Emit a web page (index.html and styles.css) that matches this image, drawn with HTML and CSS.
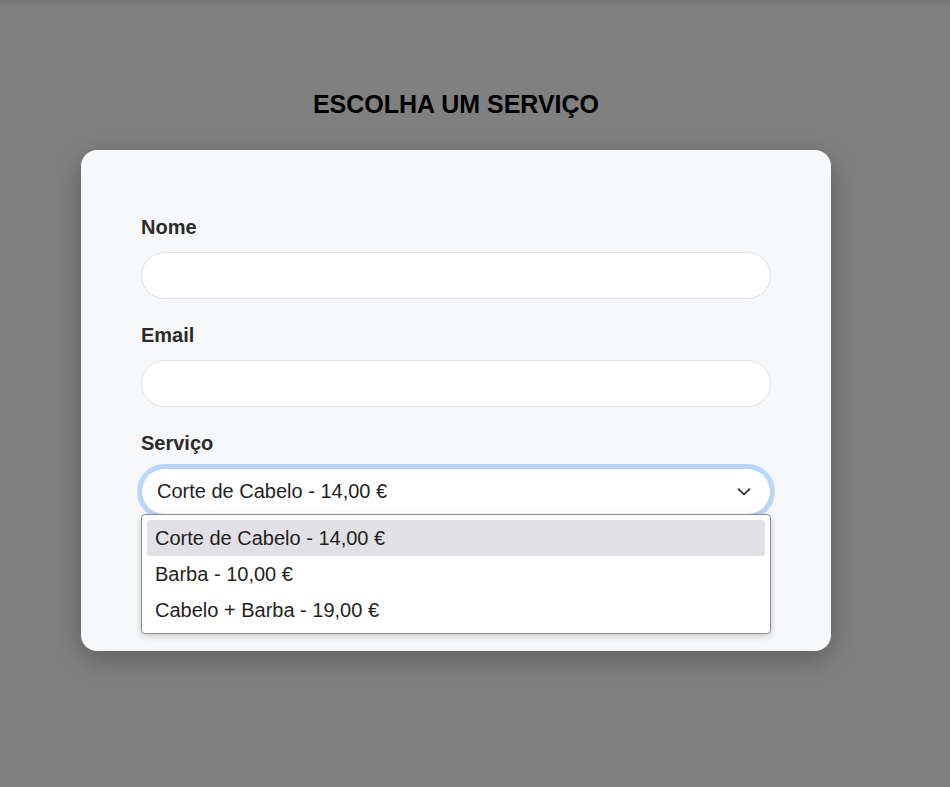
FILE: index.html
```html
<!DOCTYPE html>
<html lang="pt">
<head>
<meta charset="utf-8">
<title>Escolha um serviço</title>
<link rel="stylesheet" href="styles.css">
</head>
<body>
<div class="overlay">
  <h2 class="title">ESCOLHA UM SERVIÇO</h2>
  <form class="card">
    <div class="field">
      <label class="label">Nome</label>
      <div class="input"></div>
    </div>
    <div class="field">
      <label class="label">Email</label>
      <div class="input"></div>
    </div>
    <div class="field">
      <label class="label">Serviço</label>
      <div class="select-wrap">
        <div class="select">
          <span>Corte de Cabelo - 14,00 €</span>
          <svg class="chevron" width="14" height="8" viewBox="0 0 14 8"><path d="M1.5 1.2 L7 6.4 L12.5 1.2" fill="none" stroke="#2f2f2f" stroke-width="1.8" stroke-linecap="round" stroke-linejoin="round"/></svg>
        </div>
        <div class="dropdown">
          <div class="option active">Corte de Cabelo - 14,00 €</div>
          <div class="option">Barba - 10,00 €</div>
          <div class="option">Cabelo + Barba - 19,00 €</div>
        </div>
      </div>
    </div>
  </form>
</div>
</body>
</html>
```
FILE: styles.css
```css
html, body {
  margin: 0;
  padding: 0;
}
body {
  background: #808080;
  font-family: "Liberation Sans", Arial, sans-serif;
}
.overlay {
  min-height: 787px;
  box-sizing: border-box;
  padding: 90px 38px 0 0;
  background: linear-gradient(to bottom, #747474 0px, #7d7d7d 5px, #808080 10px);
}
.title {
  margin: 0 0 31px;
  text-align: center;
  font-size: 25px;
  line-height: 29px;
  font-weight: 700;
  color: #000;
}
.card {
  width: 750px;
  margin: 0 0 0 81px;
  box-sizing: border-box;
  background: #f7f8fa;
  border-radius: 16px;
  padding: 65px 60px 136px;
  box-shadow: 0 8px 28px rgba(0, 0, 0, 0.28);
  display: flex;
  flex-direction: column;
  gap: 24px;
}
.field {
  display: flex;
  flex-direction: column;
  gap: 13px;
}
.label {
  font-size: 20px;
  line-height: 24px;
  font-weight: 700;
  color: #2b2b2b;
}
.input {
  height: 47px;
  box-sizing: border-box;
  background: #fff;
  border: 1px solid #dfe1e5;
  border-radius: 24px;
}
.select-wrap {
  position: relative;
}
.select {
  height: 47px;
  box-sizing: border-box;
  background: #fff;
  border: 1px solid #b3cef8;
  border-radius: 24px;
  box-shadow: 0 0 0 4px #bcd5fa;
  display: flex;
  align-items: center;
  justify-content: space-between;
  padding: 0 19px 0 15px;
  font-size: 20px;
  color: #1f1f1f;
}
.chevron {
  display: block;
}
.dropdown {
  position: absolute;
  left: 0;
  right: 0;
  top: 46px;
  background: #fff;
  border: 1px solid #8f8f8f;
  border-radius: 4px;
  padding: 5px;
  box-shadow: 0 2px 6px rgba(0, 0, 0, 0.2);
  z-index: 2;
}
.option {
  height: 36px;
  line-height: 36px;
  padding: 0 8px;
  font-size: 20px;
  color: #1f1f1f;
  border-radius: 3px;
}
.option.active {
  background: #e1e0e5;
}
```
